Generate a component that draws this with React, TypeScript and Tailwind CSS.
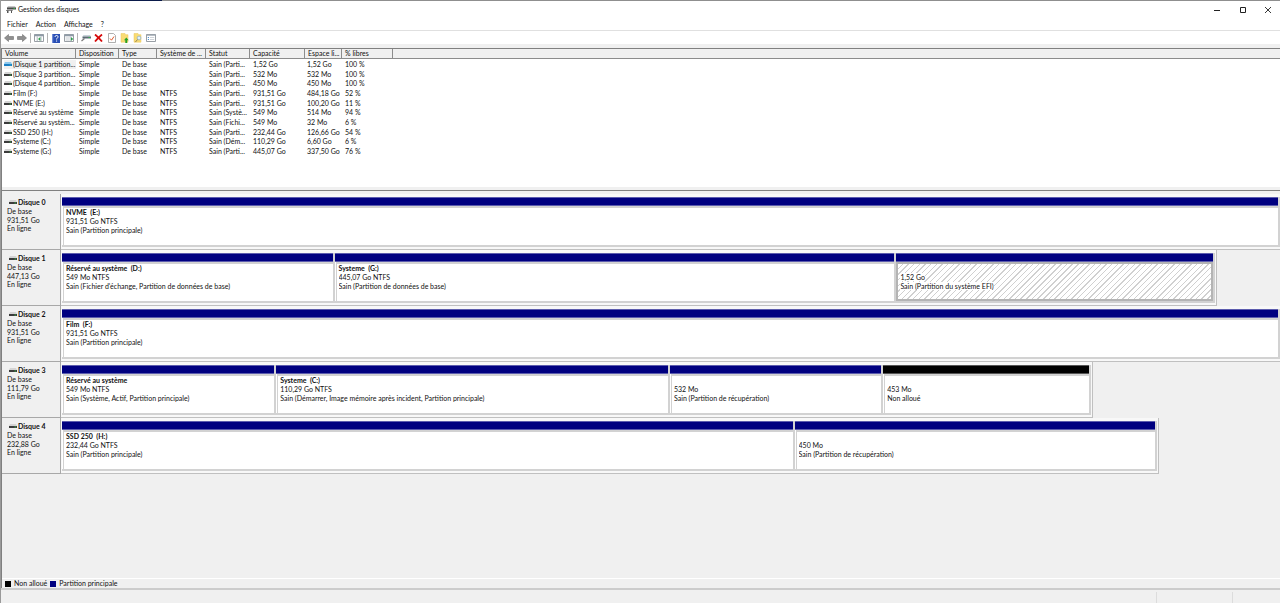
import type { ReactNode } from 'react'

type Volume = {
  name: string
  fs: string
  status: string
  capacity: string
  free: string
  percent: string
  selected?: boolean
}

type Partition = {
  title?: string
  size: string
  status: string
  weight: number
  unallocated?: boolean
  selected?: boolean
}

type Disk = {
  name: string
  size: string
  width: number
  partitions: Partition[]
}

const volumes: Volume[] = [
  { name: '(Disque 1 partition...', fs: '', status: 'Sain (Parti...', capacity: '1,52 Go', free: '1,52 Go', percent: '100 %', selected: true },
  { name: '(Disque 3 partition...', fs: '', status: 'Sain (Parti...', capacity: '532 Mo', free: '532 Mo', percent: '100 %' },
  { name: '(Disque 4 partition...', fs: '', status: 'Sain (Parti...', capacity: '450 Mo', free: '450 Mo', percent: '100 %' },
  { name: 'Film (F:)', fs: 'NTFS', status: 'Sain (Parti...', capacity: '931,51 Go', free: '484,18 Go', percent: '52 %' },
  { name: 'NVME (E:)', fs: 'NTFS', status: 'Sain (Parti...', capacity: '931,51 Go', free: '100,20 Go', percent: '11 %' },
  { name: 'Réservé au système', fs: 'NTFS', status: 'Sain (Systè...', capacity: '549 Mo', free: '514 Mo', percent: '94 %' },
  { name: 'Réservé au systèm...', fs: 'NTFS', status: 'Sain (Fichi...', capacity: '549 Mo', free: '32 Mo', percent: '6 %' },
  { name: 'SSD 250 (H:)', fs: 'NTFS', status: 'Sain (Parti...', capacity: '232,44 Go', free: '126,66 Go', percent: '54 %' },
  { name: 'Systeme (C:)', fs: 'NTFS', status: 'Sain (Dém...', capacity: '110,29 Go', free: '6,60 Go', percent: '6 %' },
  { name: 'Systeme (G:)', fs: 'NTFS', status: 'Sain (Parti...', capacity: '445,07 Go', free: '337,50 Go', percent: '76 %' },
]

const disks: Disk[] = [
  {
    name: 'Disque 0',
    size: '931,51 Go',
    width: 100,
    partitions: [{ title: 'NVME  (E:)', size: '931,51 Go NTFS', status: 'Sain (Partition principale)', weight: 1 }],
  },
  {
    name: 'Disque 1',
    size: '447,13 Go',
    width: 94.8,
    partitions: [
      { title: 'Réservé au système  (D:)', size: '549 Mo NTFS', status: "Sain (Fichier d'échange, Partition de données de base)", weight: 272 },
      { title: 'Systeme  (G:)', size: '445,07 Go NTFS', status: 'Sain (Partition de données de base)', weight: 563 },
      { size: '1,52 Go', status: 'Sain (Partition du système EFI)', weight: 318, selected: true },
    ],
  },
  {
    name: 'Disque 2',
    size: '931,51 Go',
    width: 100,
    partitions: [{ title: 'Film  (F:)', size: '931,51 Go NTFS', status: 'Sain (Partition principale)', weight: 1 }],
  },
  {
    name: 'Disque 3',
    size: '111,79 Go',
    width: 84.7,
    partitions: [
      { title: 'Réservé au système', size: '549 Mo NTFS', status: 'Sain (Système, Actif, Partition principale)', weight: 214 },
      { title: 'Systeme  (C:)', size: '110,29 Go NTFS', status: 'Sain (Démarrer, Image mémoire après incident, Partition principale)', weight: 395 },
      { size: '532 Mo', status: 'Sain (Partition de récupération)', weight: 213 },
      { size: '453 Mo', status: 'Non alloué', weight: 208, unallocated: true },
    ],
  },
  {
    name: 'Disque 4',
    size: '232,88 Go',
    width: 90.1,
    partitions: [
      { title: 'SSD 250  (H:)', size: '232,44 Go NTFS', status: 'Sain (Partition principale)', weight: 733 },
      { size: '450 Mo', status: 'Sain (Partition de récupération)', weight: 362 },
    ],
  },
]

const columns = ['Volume', 'Disposition', 'Type', 'Système de ...', 'Statut', 'Capacité', 'Espace li...', '% libres']

function DriveIcon({ selected }: { selected?: boolean }) {
  return (
    <svg width="8" height="5" viewBox="0 0 8 5" className="shrink-0" aria-hidden="true">
      <path d="M1 0h6l1 2H0z" fill={selected ? '#8cc8ee' : '#d4d4d4'} />
      <path d="M0 2h8v2H0z" fill={selected ? '#1c7fc4' : '#3c3c3c'} />
      <path d="M5.500 2.500h1.500v1H5.500z" fill={selected ? '#2aa7c0' : '#35b04a'} />
    </svg>
  )
}

function AppIcon() {
  return (
    <svg width="10" height="9" viewBox="0 0 10 9" aria-hidden="true">
      <path d="M2 1h7l1 2H1z" fill="#c9c9c9" />
      <path d="M1 2.500h9v2H1z" fill="#4a4a4a" />
      <path d="M7.500 3h1.500v1H7.500z" fill="#35b04a" />
      <path d="M0 5h7l-.5 1H0z" fill="#8a8a8a" />
      <path d="M1 5.500h1.500V8H1zM5 5.500h1V8H5z" fill="#555" />
    </svg>
  )
}

function ArrowIcon({ flip }: { flip?: boolean }) {
  return (
    <svg width="10" height="8" viewBox="0 0 10 8" aria-hidden="true">
      <path
        d={flip ? 'M9.500 4 5.500.5v2h-5v3h5v2z' : 'M.5 4l4-3.500v2h5v3h-5v2z'}
        fill="#8f8f8f"
        stroke="#6e6e6e"
        strokeWidth=".6"
      />
    </svg>
  )
}

function PanelIcon({ side }: { side: 'left' | 'right' }) {
  return (
    <svg width="10" height="8" viewBox="0 0 10 8" aria-hidden="true">
      <path d="M.5.5h9v7h-9z" fill="#fff" stroke="#8d949b" strokeWidth=".9" />
      <path d="M.5.5h9v1.800h-9z" fill="#8f9ba7" />
      {side === 'left' ? (
        <>
          <path d="M3.200 2.500v5M7 2.500v5" stroke="#9aa5b0" strokeWidth=".8" />
          <path d="M6.300 3v4L4 5z" fill="#2f9e4b" />
        </>
      ) : (
        <>
          <path d="M6.200 2.500v5" stroke="#9aa5b0" strokeWidth=".8" />
          <path d="M1.500 4h3.500M1.500 6h3.500" stroke="#b5bcc3" strokeWidth=".8" />
          <path d="M7 3v4L9.200 5z" fill="#2f9e4b" />
        </>
      )}
    </svg>
  )
}

function HelpIcon() {
  return (
    <svg width="8" height="9" viewBox="0 0 8 9" aria-hidden="true">
      <path d="M0 0h8v9H0z" fill="#2a4fb5" />
      <path d="M0 0h1.200v9H0z" fill="#6f8bd6" />
      <path d="M3 3c0-2 3-2 3-.2C6 4 4.600 4 4.600 5.500M4.600 6.500v1.100" fill="none" stroke="#fff" strokeWidth="1" />
    </svg>
  )
}

function RescanIcon() {
  return (
    <svg width="10" height="8" viewBox="0 0 10 8" aria-hidden="true">
      <path d="M2.500 1H9l1 1.500H1.500z" fill="#c9d3da" />
      <path d="M1.500 2.500H10v2H1.500z" fill="#5c6b75" />
      <path d="M7.500 3H9v1H7.500z" fill="#35b04a" />
      <path d="M.5 7 3.500 4.500" stroke="#7a7a7a" strokeWidth="1.200" />
    </svg>
  )
}

function DeleteIcon() {
  return (
    <svg width="9" height="8" viewBox="0 0 9 8" aria-hidden="true">
      <path d="M1 .5c2.500 2 5 4.500 7 7M8 .5C5.500 2.500 3 5 1 7.500" stroke="#d60c0c" strokeWidth="1.800" fill="none" />
    </svg>
  )
}

function PropertiesIcon() {
  return (
    <svg width="8" height="10" viewBox="0 0 8 10" aria-hidden="true">
      <path d="M.5.5h5L7.500 2.500v7h-7z" fill="#fff" stroke="#9a9a9a" strokeWidth=".8" />
      <path d="M2 5.500 3.500 7.200 6 3.500" fill="none" stroke="#e0592a" strokeWidth="1" />
    </svg>
  )
}

function FolderIcon({ kind }: { kind: 'up' | 'search' }) {
  return (
    <svg width="9" height="10" viewBox="0 0 9 10" aria-hidden="true">
      <path d="M1 .5h4l.8 1.200H8v7.500H1z" fill="#f9dc74" stroke="#e8c65c" strokeWidth=".5" />
      {kind === 'up' ? (
        <path d="M5.300 10V7.200H4L6.300 4.500l2.300 2.700H7.200V10z" fill="#25a127" />
      ) : (
        <>
          <circle cx="6" cy="5" r="1.900" fill="#dff1fb" stroke="#8aa9bd" strokeWidth=".7" />
          <path d="M4.600 6.500 2.400 9" stroke="#8a7a50" strokeWidth=".9" />
        </>
      )}
    </svg>
  )
}

function ListIcon() {
  return (
    <svg width="10" height="8" viewBox="0 0 10 8" aria-hidden="true">
      <path d="M.5.5h9v7h-9z" fill="#fff" stroke="#8d949b" strokeWidth=".9" />
      <path d="M.5.5h9v1.200h-9z" fill="#98a3ad" />
      <path d="M1.800 3.500H3M1.800 5.500H3" stroke="#3d86c6" strokeWidth=".9" />
      <path d="M4 3.500h4.200M4 5.500h4.200" stroke="#bcc2c8" strokeWidth=".7" />
    </svg>
  )
}

function ToolButton({ label, children }: { label: string; children: ReactNode }) {
  return (
    <button type="button" aria-label={label} className="flex h-[10px] w-[13px] items-center justify-center">
      {children}
    </button>
  )
}

function ToolSeparator() {
  return <span className="mr-px ml-[2px] h-[10px] w-px bg-[#b4b4b4]" />
}

function TitleBar() {
  return (
    <header className="flex h-[17px] items-center justify-between pl-[5px]">
      <div className="flex items-center gap-[2px]">
        <AppIcon />
        <h1>Gestion des disques</h1>
      </div>
      <div className="flex">
        <button type="button" aria-label="Réduire" className="flex h-4 w-[26px] items-center justify-center">
          <svg width="6" height="6" viewBox="0 0 6 6"><path d="M0 3.500h6" stroke="#222" /></svg>
        </button>
        <button type="button" aria-label="Agrandir" className="flex h-4 w-[26px] items-center justify-center">
          <svg width="6" height="6" viewBox="0 0 6 6"><path d="M.5.5h5v5h-5z" fill="none" stroke="#222" /></svg>
        </button>
        <button type="button" aria-label="Fermer" className="flex h-4 w-6 items-center justify-center">
          <svg width="6" height="6" viewBox="0 0 6 6"><path d="M0 0l6 6M6 0L0 6" stroke="#222" strokeWidth=".9" /></svg>
        </button>
      </div>
    </header>
  )
}

function Toolbar() {
  return (
    <div className="flex h-[12px] items-center pl-px">
      <ToolButton label="Précédent"><ArrowIcon /></ToolButton>
      <ToolButton label="Suivant"><ArrowIcon flip /></ToolButton>
      <ToolSeparator />
      <ToolButton label="Arborescence"><PanelIcon side="left" /></ToolButton>
      <ToolSeparator />
      <ToolButton label="Aide"><HelpIcon /></ToolButton>
      <ToolButton label="Volet Actions"><PanelIcon side="right" /></ToolButton>
      <ToolSeparator />
      <ToolButton label="Analyser les disques"><RescanIcon /></ToolButton>
      <ToolButton label="Supprimer"><DeleteIcon /></ToolButton>
      <ToolButton label="Propriétés"><PropertiesIcon /></ToolButton>
      <ToolButton label="Ouvrir"><FolderIcon kind="up" /></ToolButton>
      <ToolButton label="Explorer"><FolderIcon kind="search" /></ToolButton>
      <ToolButton label="Affichage"><ListIcon /></ToolButton>
    </div>
  )
}

function VolumeTable() {
  return (
    <table className="w-full table-fixed border-separate border-spacing-0 text-left">
      <colgroup>
        <col className="w-[74px]" />
        <col className="w-[43px]" />
        <col className="w-[38px]" />
        <col className="w-[49px]" />
        <col className="w-[44px]" />
        <col className="w-[55px]" />
        <col className="w-[37px]" />
        <col className="w-[51px]" />
        <col />
      </colgroup>
      <thead className="bg-[#f0f0f0]">
        <tr className="h-[10px]">
          {columns.map((column) => (
            <th
              key={column}
              className="overflow-hidden border-r border-b border-[#8c8c8c] p-0 pl-[3px] font-normal whitespace-nowrap"
            >
              {column}
            </th>
          ))}
          <td className="border-b border-[#8c8c8c] p-0" />
        </tr>
      </thead>
      <tbody>
        {volumes.map((volume, i) => (
          <tr key={i} className="h-[10px] whitespace-nowrap nth-[3n]:h-[9px]">
            <td className="p-0 pl-[2px]">
              <div className={volume.selected ? 'flex items-center gap-px bg-[#f0f0f0]' : 'flex items-center gap-px'}>
                <DriveIcon selected={volume.selected} />
                {volume.name}
              </div>
            </td>
            <td className="p-0 pl-[3px]">Simple</td>
            <td className="p-0 pl-[3px]">De base</td>
            <td className="p-0 pl-[3px]">{volume.fs}</td>
            <td className="p-0 pl-[3px]">{volume.status}</td>
            <td className="p-0 pl-[3px]">{volume.capacity}</td>
            <td className="p-0 pl-[2px]">{volume.free}</td>
            <td className="p-0 pl-[3px]">{volume.percent}</td>
          </tr>
        ))}
      </tbody>
    </table>
  )
}

function PartitionBox({ partition }: { partition: Partition }) {
  return (
    <div
      className="flex min-w-0 basis-0 flex-col border-r-2 border-b-2 border-[#d2d2d2] bg-white"
      style={{ flexGrow: partition.weight }}
    >
      <div
        className={
          partition.unallocated
            ? 'h-[9px] border-y border-[#555] bg-black'
            : 'h-[9px] border-y border-[#5c5cae] bg-[#000080]'
        }
      />
      <div
        className={
          partition.selected
            ? 'flex-1 border-2 border-[#b4b4b4] bg-[repeating-linear-gradient(135deg,#fff_0_3px,#d0d0d0_3px_4px)] pl-[2px]'
            : 'ml-px flex-1 border-t-2 border-l border-[#d2d2d2] pl-[2px]'
        }
      >
        <p className="h-[9px] font-bold whitespace-pre">{partition.title}</p>
        <p className="overflow-hidden whitespace-nowrap">
          <span className={partition.selected ? 'bg-white' : ''}>{partition.size}</span>
        </p>
        <p className="overflow-hidden leading-[8px] whitespace-nowrap">
          <span className={partition.selected ? 'bg-white' : ''}>{partition.status}</span>
        </p>
      </div>
    </div>
  )
}

function DiskRow({ disk }: { disk: Disk }) {
  const full = disk.width === 100

  return (
    <section className="flex h-[56px]">
      <div className="w-[59px] shrink-0 border-r border-b border-[#a8a8a8] pt-[4px] pl-[5px]">
        <h2 className="flex items-center gap-px pl-[2px] font-bold">
          <DriveIcon />
          {disk.name}
        </h2>
        <p>De base</p>
        <p className="leading-[8px]">{disk.size}</p>
        <p>En ligne</p>
      </div>
      <div className="min-w-0 flex-1">
        <div
          className={
            full
              ? 'flex h-full border-b border-[#c0c0c0] bg-[#f8f8f8] pt-[3px] pb-[2px] pl-px'
              : 'flex h-full border-r border-b border-[#c0c0c0] bg-[#f8f8f8] pt-[3px] pr-px pb-[2px] pl-px'
          }
          style={{ width: `${disk.width}%` }}
        >
          {disk.partitions.map((partition, i) => (
            <PartitionBox key={i} partition={partition} />
          ))}
        </div>
      </div>
    </section>
  )
}

function App() {
  return (
    <div className="flex min-h-screen flex-col border-l border-[#9a9a9a] bg-white font-['Lato','Noto_Sans',sans-serif] text-[7px] leading-[9px] text-[#111]">
      <div className="flex h-px bg-[#8f8f8f]">
        <div className="ml-[59px] w-[102px] bg-[#0a1a4a]" />
      </div>
      <TitleBar />
      <nav className="flex h-[13px] items-center gap-[8px] border-b border-[#e0e0e0] pl-[6px]">
        <button type="button">Fichier</button>
        <button type="button">Action</button>
        <button type="button">Affichage</button>
        <button type="button">?</button>
      </nav>
      <div className="border-b-4 border-[#f0f0f0] pt-px">
        <Toolbar />
      </div>
      <main className="flex flex-1 flex-col border-t border-l border-[#808080] bg-[#f0f0f0]">
        <div className="h-[138px] bg-white">
          <VolumeTable />
        </div>
        <div className="h-[4px] border-b border-[#808080]" />
        <div className="flex-1 pt-[3px]">
          {disks.map((disk) => (
            <DiskRow key={disk.name} disk={disk} />
          ))}
        </div>
        <div className="flex h-[10px] items-center gap-[3px] border-t border-white pl-[3px]">
          <span className="size-[6px] bg-black" />
          <span>Non alloué</span>
          <span className="size-[6px] bg-[#000080]" />
          <span>Partition principale</span>
        </div>
      </main>
      <footer className="flex h-[15px] justify-end border-t-2 border-[#cccccc] bg-[#f0f0f0] pt-[2px]">
        <div className="w-[76px] border-l border-[#dcdcdc]" />
        <div className="w-[48px] border-l border-[#dcdcdc]" />
      </footer>
    </div>
  )
}

export default App
